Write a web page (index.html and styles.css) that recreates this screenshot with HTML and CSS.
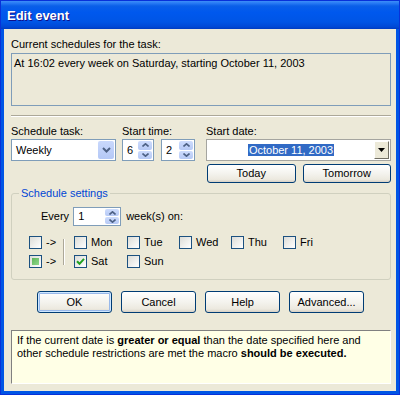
FILE: index.html
```html
<!DOCTYPE html>
<html>
	<head>
		<meta charset="utf-8">
		<link rel="stylesheet" href="styles.css">
	</head>
	<body>
		<div class="window">
			<div class="titlebar">Edit event</div>
			<div class="client">
				<div class="label">Current schedules for the task:</div>
				<div class="summary">At 16:02 every week on Saturday, starting October 11, 2003</div>
				<div class="separator"></div>

				<div class="schedule-row">
					<div class="task-field">
						<div class="label field-label">Schedule task:</div>
						<div class="combo">
							<span class="combo-text">Weekly</span>
							<span class="combo-btn">
								<svg width="9" height="6" viewBox="0 0 9 6"><path d="M1 1 L4.5 4.5 L8 1" fill="none" stroke="#4d6185" stroke-width="2"/></svg>
							</span>
						</div>
					</div>
					<div class="time-field">
						<div class="label field-label">Start time:</div>
						<div class="time-spins">
							<div class="spin spin-hour">
								<span class="spin-text">6</span>
								<span class="spin-btns">
									<span class="spin-up"><svg width="7" height="4" viewBox="0 0 7 4"><path d="M0.5 3.5 L3.5 0.8 L6.5 3.5" fill="none" stroke="#4d6185" stroke-width="1.6"/></svg></span>
									<span class="spin-down"><svg width="7" height="4" viewBox="0 0 7 4"><path d="M0.5 0.5 L3.5 3.2 L6.5 0.5" fill="none" stroke="#4d6185" stroke-width="1.6"/></svg></span>
								</span>
							</div>
							<div class="spin spin-min">
								<span class="spin-text">2</span>
								<span class="spin-btns">
									<span class="spin-up"><svg width="7" height="4" viewBox="0 0 7 4"><path d="M0.5 3.5 L3.5 0.8 L6.5 3.5" fill="none" stroke="#4d6185" stroke-width="1.6"/></svg></span>
									<span class="spin-down"><svg width="7" height="4" viewBox="0 0 7 4"><path d="M0.5 0.5 L3.5 3.2 L6.5 0.5" fill="none" stroke="#4d6185" stroke-width="1.6"/></svg></span>
								</span>
							</div>
						</div>
					</div>
					<div class="date-field">
						<div class="label field-label">Start date:</div>
						<div class="datepick">
							<span class="date-text"><span class="selected">October 11, 2003</span></span>
							<span class="date-btn">
								<svg width="7" height="4" viewBox="0 0 7 4"><path d="M0 0 H7 L3.5 4 Z" fill="#000"/></svg>
							</span>
						</div>
						<div class="date-buttons">
							<div class="btn">Today</div>
							<div class="btn">Tomorrow</div>
						</div>
					</div>
				</div>

				<fieldset class="group">
					<legend>Schedule settings</legend>
					<div class="every-row">
						<span>Every</span>
						<div class="spin spin-every">
							<span class="spin-text">1</span>
							<span class="spin-btns">
								<span class="spin-up"><svg width="7" height="4" viewBox="0 0 7 4"><path d="M0.5 3.5 L3.5 0.8 L6.5 3.5" fill="none" stroke="#4d6185" stroke-width="1.6"/></svg></span>
								<span class="spin-down"><svg width="7" height="4" viewBox="0 0 7 4"><path d="M0.5 0.5 L3.5 3.2 L6.5 0.5" fill="none" stroke="#4d6185" stroke-width="1.6"/></svg></span>
							</span>
						</div>
						<span>week(s) on:</span>
					</div>
					<div class="days">
						<div class="toggles">
							<div class="check-item"><span class="cb"></span>-&gt;</div>
							<div class="check-item"><span class="cb cb-mixed"></span>-&gt;</div>
						</div>
						<div class="vsep"></div>
						<div class="day-grid">
							<div class="check-item"><span class="cb"></span>Mon</div>
							<div class="check-item"><span class="cb"></span>Tue</div>
							<div class="check-item"><span class="cb"></span>Wed</div>
							<div class="check-item"><span class="cb"></span>Thu</div>
							<div class="check-item"><span class="cb"></span>Fri</div>
							<div class="check-item"><span class="cb cb-checked"><svg width="9" height="9" viewBox="0 0 9 9"><path d="M1 4.2 L3.5 6.8 L8 1.8" fill="none" stroke="#21a121" stroke-width="2"/></svg></span>Sat</div>
							<div class="check-item"><span class="cb"></span>Sun</div>
						</div>
					</div>
				</fieldset>

				<div class="buttons">
					<div class="btn btn-default">OK</div>
					<div class="btn">Cancel</div>
					<div class="btn">Help</div>
					<div class="btn">Advanced...</div>
				</div>

				<div class="info">
					If the current date is <b>greater or equal</b> than the date specified here and<br>
					other schedule restrictions are met the macro <b>should be executed.</b>
				</div>
			</div>
		</div>
	</body>
</html>
```

FILE: styles.css
```css
body {
	margin: 0;
	font-family: "Liberation Sans", Arial, sans-serif;
	font-size: 11px;
	line-height: 13px;
	color: #000;
	background: #fff;
}

.window {
	width: 400px;
	height: 395px;
	box-sizing: border-box;
	border: 1px solid #0831d9;
	background: #0055e5;
	display: flex;
	flex-direction: column;
}

.titlebar {
	height: 28px;
	flex: none;
	padding-left: 6px;
	color: #fff;
	font-size: 13px;
	font-weight: bold;
	line-height: 30px;
	text-shadow: 1px 1px #0f1089;
	background: linear-gradient(to bottom, #3d8ef8 0, #2a7cf5 2px, #0a5fe8 5px, #0058ee 40%, #0055e5 75%, #0049d6 92%, #003cc0 100%);
}

.client {
	flex: 1;
	margin: 0 3px 3px;
	padding: 9px 5px 0 7px;
	background: #ece9d8;
}

.summary {
	margin-top: 2px;
	height: 53px;
	box-sizing: border-box;
	border: 1px solid #7f9db9;
	padding: 3px 2px 0;
}

.separator {
	margin-top: 9px;
	height: 1px;
	border-top: 1px solid #aca899;
	background: #fff;
}

.schedule-row {
	display: flex;
	margin-top: 8px;
}

.field-label {
	margin-bottom: 1px;
}

.task-field {
	width: 105px;
}

.combo {
	height: 22px;
	box-sizing: border-box;
	border: 1px solid #7f9db9;
	background: #fff;
	display: flex;
	align-items: center;
	padding: 1px;
}

.combo-text {
	flex: 1;
	padding-left: 3px;
}

.combo-btn {
	width: 16px;
	height: 18px;
	border-radius: 2px;
	background: linear-gradient(to bottom, #c9d8fc, #b4c8f6);
	display: flex;
	align-items: center;
	justify-content: center;
}

.time-field {
	margin-left: 6px;
}

.time-spins {
	display: flex;
	gap: 7px;
}

.spin {
	height: 22px;
	box-sizing: border-box;
	border: 1px solid #7f9db9;
	background: #fff;
	display: flex;
	align-items: center;
	padding: 1px;
}

.spin-hour {
	width: 32px;
}

.spin-min {
	width: 34px;
}

.spin-text {
	flex: 1;
	padding-left: 3px;
}

.spin-btns {
	width: 14px;
	height: 100%;
	display: flex;
	flex-direction: column;
	gap: 1px;
}

.spin-up,
.spin-down {
	flex: 1;
	border-radius: 2px;
	background: linear-gradient(to bottom, #cddcfd, #b6c9f5);
	display: flex;
	align-items: center;
	justify-content: center;
}

.date-field {
	margin-left: 11px;
	width: 185px;
}

.datepick {
	height: 22px;
	box-sizing: border-box;
	border: 1px solid #a5a5a0;
	background: #fff;
	display: flex;
	align-items: center;
	padding: 1px;
}

.date-text {
	flex: 1;
	text-align: center;
}

.selected {
	background: #316ac5;
	color: #fff;
	padding: 0 1px;
}

.date-btn {
	width: 13px;
	height: 16px;
	background: #ece9d8;
	border: 1px solid;
	border-color: #fff #716f64 #716f64 #fff;
	display: flex;
	align-items: center;
	justify-content: center;
}

.date-buttons {
	display: flex;
	gap: 7px;
	margin-top: 3px;
	padding-left: 1px;
}

.date-buttons .btn {
	width: 89px;
	height: 19px;
}

.btn {
	box-sizing: border-box;
	border: 1px solid #003c74;
	border-radius: 3px;
	background: linear-gradient(to bottom, #fff 0, #f4f3ee 50%, #ece9df 85%, #d6d0c5 100%);
	display: flex;
	align-items: center;
	justify-content: center;
}

.btn-default {
	box-shadow: inset 0 0 0 1px #cee7ff, inset 0 0 0 2px #98b8ea;
}

.group {
	margin: 4px 0 0;
	padding: 7px 0 11px;
	border: 1px solid #d0d0bf;
	border-radius: 3px;
}

.group legend {
	margin-left: 7px;
	padding: 0 2px;
	color: #0046d5;
}

.every-row {
	display: flex;
	align-items: center;
	gap: 4px;
	padding-left: 29px;
}

.spin-every {
	width: 48px;
	height: 19px;
	margin-right: 1px;
}

.days {
	display: flex;
	margin-top: 10px;
	padding-left: 17px;
}

.toggles {
	width: 30px;
	display: flex;
	flex-direction: column;
	gap: 6px;
}

.vsep {
	width: 0;
	margin: 3px 9px 0 4px;
	height: 26px;
	border-left: 1px solid #aca899;
	border-right: 1px solid #fff;
}

.day-grid {
	display: grid;
	grid-template-columns: 53px 52px 52px 52px 52px;
	row-gap: 6px;
}

.check-item {
	display: flex;
	align-items: center;
	gap: 4px;
	height: 13px;
}

.cb {
	width: 13px;
	height: 13px;
	box-sizing: border-box;
	border: 1px solid #1c5180;
	background: linear-gradient(135deg, #dcdcd7, #fff);
	display: flex;
	align-items: center;
	justify-content: center;
	flex: none;
}

.cb-mixed::after {
	content: "";
	width: 7px;
	height: 7px;
	background: linear-gradient(135deg, #5fb45a, #8fd98a);
}

.buttons {
	display: flex;
	gap: 9px;
	margin-top: 11px;
	padding-left: 26px;
}

.buttons .btn {
	width: 75px;
	height: 22px;
}

.info {
	margin-top: 17px;
	height: 49px;
	border: 1px solid;
	border-color: #808080 #fff #fff #808080;
	background: #ffffe6;
	padding: 3px 5px 0;
}
```
